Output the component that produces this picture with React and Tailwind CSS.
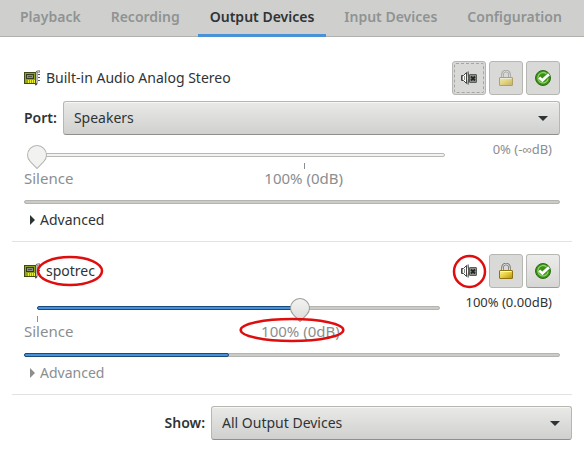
import React, { useState } from "react";

const MAX_VOLUME = 153;

const tabs = [
  { name: "Playback" },
  { name: "Recording" },
  { name: "Output Devices", active: true },
  { name: "Input Devices" },
  { name: "Configuration" },
];

function CardIcon() {
  return (
    <svg width="16" height="16" viewBox="0 0 16 16" aria-hidden="true" className="shrink-0">
      <rect x="0.5" y="2.5" width="11" height="11" fill="#93a51a" stroke="#3f4a10" />
      <rect x="2.5" y="4.5" width="7" height="4" fill="#8a8f84" stroke="#34391f" />
      <rect x="4" y="6" width="4" height="1" fill="#4a4f44" />
      <path d="M4.5 10v3M6.5 10v3M8.5 10v3M10.5 10v3" stroke="#eef02a" />
      <path d="M16 1.5h-2q-1.500 0-1.500 1.500v10q0 1.500-1.500 1.500" fill="none" stroke="#55585a" strokeWidth="2" />
      <path d="M15.500 1.500h-1.500q-1.500 0-1.500 1.500v10" fill="none" stroke="#d5d8d7" strokeWidth="0.800" />
      <path d="M14 4.500h2M14 7.500h2M14 10.500h2" stroke="#55585a" />
    </svg>
  );
}

function MuteIcon() {
  return (
    <svg width="16" height="16" viewBox="0 0 16 16" aria-hidden="true">
      <path d="M0.500 5.500h2L5.500 2.500v11L2.500 10.500h-2z" fill="#ffffff" stroke="#444643" />
      <path d="M1 6h1v4H1z" fill="#8b8d89" />
      <path d="M3.500 6v4" stroke="#8b8d89" />
      <path d="M7 1.500q1.500 6.500 0 13" fill="none" stroke="#555753" strokeWidth="1.200" />
      <rect x="8.500" y="4.500" width="7" height="8" rx="0.500" fill="#8f918d" stroke="#5b5d59" />
      <path d="M10 6.500l4 4M14 6.500l-4 4" stroke="#252725" strokeWidth="1.800" />
    </svg>
  );
}

function LockIcon({ faded }) {
  return (
    <svg width="16" height="16" viewBox="0 0 16 16" aria-hidden="true" className={faded ? "opacity-55" : ""}>
      <defs>
        <linearGradient id="brass" x1="0" y1="0" x2="1" y2="1">
          <stop offset="0" stopColor="#fdf6a8" />
          <stop offset="0.500" stopColor="#e8cf3a" />
          <stop offset="1" stopColor="#b58f10" />
        </linearGradient>
      </defs>
      <path d="M4.500 9V4.500a3.500 3.500 0 0 1 7 0V9" fill="none" stroke="#777975" strokeWidth="2.600" />
      <path d="M4.500 9V4.500a3.500 3.500 0 0 1 7 0V9" fill="none" stroke="#d9dad7" strokeWidth="1" />
      <rect x="1.500" y="7.500" width="13" height="8" rx="0.500" fill="url(#brass)" stroke="#8f7410" />
      <path d="M2.500 8.500h11" stroke="#fffbd0" />
    </svg>
  );
}

function CheckIcon() {
  return (
    <svg width="16" height="16" viewBox="0 0 16 16" aria-hidden="true">
      <circle cx="8" cy="8" r="7.500" fill="#3a9114" stroke="#2c6e12" />
      <path d="M11.500 3.800A5.200 5.200 0 1 0 13.200 8.500" fill="none" stroke="#8fce70" strokeWidth="1.300" />
      <path d="M4.200 7.400L7.400 10.400 14 4.300" fill="none" stroke="#ffffff" strokeWidth="2.800" />
    </svg>
  );
}

function Ring({ className }) {
  return (
    <svg className={`pointer-events-none absolute overflow-visible ${className}`} aria-hidden="true">
      <ellipse cx="50%" cy="50%" rx="50%" ry="50%" fill="none" stroke="#df0d0d" strokeWidth="2.500" />
    </svg>
  );
}

function ComboBox({ id, options, className }) {
  return (
    <div className={`relative flex-1 ${className}`}>
      <select
        id={id}
        className="h-[34px] w-full appearance-none rounded-[3px] border border-[#b6b6b3] border-b-[#8f8f8c] bg-linear-to-b from-[#e9e9e8] to-[#d0d0ce] px-2.5 text-[#2e3436] inset-shadow-[0_1px_#f6f6f5]"
      >
        {options.map((o) => (
          <option key={o}>{o}</option>
        ))}
      </select>
      <svg width="10" height="5" viewBox="0 0 10 5" aria-hidden="true" className="pointer-events-none absolute top-[15px] right-3">
        <path d="M0 0h10L5 5z" fill="#2e3436" />
      </svg>
    </div>
  );
}

const buttonBase = "flex size-[34px] items-center justify-center rounded-[3px] border";
const pressed = "border-[#b6b6b3] bg-[#d9d9d8]";
const raised = "border-[#b6b6b3] border-b-[#9b9b98] bg-linear-to-b from-[#ececeb] to-[#d6d6d4]";

function Volume({ id, initial, muted, labelWidth, level, ringed }) {
  const [value, setValue] = useState(initial);
  const hundred = `${(100 / MAX_VOLUME) * 100}%`;
  return (
    <div className="mt-2.5 flex">
      <div className="min-w-0 flex-1">
        <div className="relative ml-[13px] h-5">
          <div className={`absolute inset-x-0 top-2 h-1 rounded-xs border ${muted ? "border-[#b8b8b5] bg-[#f3f3f2]" : "border-[#b4b4b1] bg-[#cbcbc8]"}`} />
          {!muted && (
            <div
              className="absolute top-2 left-0 h-1 rounded-xs border border-[#184b7c] bg-[#4a90d9]"
              style={{ width: `${(value / MAX_VOLUME) * 100}%` }}
            />
          )}
          <span
            className="absolute top-[18px] h-1.5 w-px bg-[#8b8e8f]"
            style={{ left: muted ? hundred : "0%" }}
          />
          <input
            id={id}
            type="range"
            min="0"
            max={MAX_VOLUME}
            value={value}
            aria-label="Volume"
            onChange={(e) => setValue(Number(e.target.value))}
            className={`absolute -left-2.5 h-5 w-[calc(100%+20px)] appearance-none bg-transparent [&::-webkit-slider-thumb]:size-5 [&::-webkit-slider-thumb]:rotate-45 [&::-webkit-slider-thumb]:appearance-none [&::-webkit-slider-thumb]:rounded-full [&::-webkit-slider-thumb]:rounded-br-none [&::-webkit-slider-thumb]:border [&::-webkit-slider-thumb]:bg-linear-to-br ${muted ? "[&::-webkit-slider-thumb]:border-[#b4b4b1] [&::-webkit-slider-thumb]:from-[#f2f2f1] [&::-webkit-slider-thumb]:to-[#f2f2f1]" : "[&::-webkit-slider-thumb]:border-[#9b9b98] [&::-webkit-slider-thumb]:from-[#f7f7f6] [&::-webkit-slider-thumb]:to-[#dcdcda]"}`}
          />
        </div>
        <div className="mt-[3px] h-5 pl-[13px] text-[15px] leading-5 text-[#8b8e8f]">
          <div className="relative h-5">
            <span className="absolute -left-[13px]">Silence</span>
            <span className="absolute -translate-x-1/2 whitespace-nowrap" style={{ left: hundred }}>
              100% (0dB)
              {ringed && <Ring className="-left-5 -top-0.5 h-[22px] w-[calc(100%+24px)]" />}
            </span>
          </div>
        </div>
      </div>
      <div className={`-mt-1.5 pr-2 text-right text-[13px] leading-5 ${labelWidth} ${muted ? "text-[#8b8e8f]" : "text-[#2e3436]"}`}>{level}</div>
    </div>
  );
}

function Device({ name, port, initial, muted, labelWidth, level, peak, ringed }) {
  const id = name.replace(/\W+/g, "-").toLowerCase();
  return (
    <section className={`border-b border-[#e1e1e0] px-3 ${muted ? "pt-6" : "pt-3"}`}>
      <div className="flex h-[34px] items-center gap-[3px]">
        <CardIcon />
        <h2 className="relative ml-[3px] mr-auto">
          {name}
          {ringed && <Ring className="-top-1 -left-2 h-7 w-16" />}
        </h2>
        <div className="relative">
          <button aria-label="Mute audio" className={`${buttonBase} ${muted ? pressed : "border-transparent"}`}>
            <MuteIcon />
          </button>
          {muted && <span className="pointer-events-none absolute inset-0.5 rounded-xs border border-dashed border-[#a5a5a4]" />}
          {ringed && <Ring className="top-0.5 left-0.5 size-[31px]" />}
        </div>
        <button aria-label="Lock channels together" className={`${buttonBase} ${pressed}`}>
          <LockIcon faded={muted} />
        </button>
        <button aria-label="Set as fallback" className={`${buttonBase} ${muted ? pressed : raised}`}>
          <CheckIcon />
        </button>
      </div>
      {port && (
        <div className="mt-1.5 flex items-center gap-1.5">
          <label htmlFor={`${id}-port`} className="font-semibold">Port:</label>
          <ComboBox id={`${id}-port`} options={[port]} className="" />
        </div>
      )}
      <Volume id={`${id}-volume`} initial={initial} muted={muted} labelWidth={labelWidth} level={level} ringed={ringed} />
      <div role="meter" aria-label="Peak level" aria-valuenow={peak} className="relative mt-3 h-1 rounded-xs border border-[#b4b4b1] bg-[#cbcbc8]">
        {peak > 0 && (
          <div className="absolute -top-px -left-px h-1 rounded-xs border border-[#184b7c] bg-[#4a90d9]" style={{ width: `${peak}%` }} />
        )}
      </div>
      <button className={`mt-1.5 mb-[11px] flex h-5 items-center gap-[5px] pl-1.5 ${muted ? "" : "text-[#8b8e8f]"}`}>
        <svg width="5" height="10" viewBox="0 0 5 10" aria-hidden="true">
          <path d="M0 0l5 5-5 5z" fill="currentColor" />
        </svg>
        Advanced
      </button>
    </section>
  );
}

export default function App() {
  return (
    <div className="min-h-screen bg-white font-['Noto_Sans',sans-serif] text-sm text-[#2e3436]">
      <nav className="flex h-[37px] gap-1.5 border-b border-[#b0b0ad] bg-[#cfcfcd] px-2 font-semibold">
        {tabs.map((t) => (
          <button
            key={t.name}
            className={`-mb-px border-b-3 px-3 whitespace-nowrap ${t.active ? "border-[#4a90d9]" : "border-transparent text-[#8f9393]"}`}
          >
            {t.name}
          </button>
        ))}
      </nav>
      <main className="px-3">
        <Device name="Built-in Audio Analog Stereo" port="Speakers" initial={0} muted labelWidth="w-[115px]" level="0% (-∞dB)" peak={0} />
        <Device name="spotrec" initial={100} labelWidth="w-[120px]" level="100% (0.00dB)" peak={38.4} ringed />
        <div className="mt-[11px] flex items-center justify-end gap-1.5">
          <label htmlFor="show" className="font-semibold">Show:</label>
          <ComboBox id="show" options={["All Output Devices"]} className="max-w-[361px]" />
        </div>
      </main>
    </div>
  );
}
